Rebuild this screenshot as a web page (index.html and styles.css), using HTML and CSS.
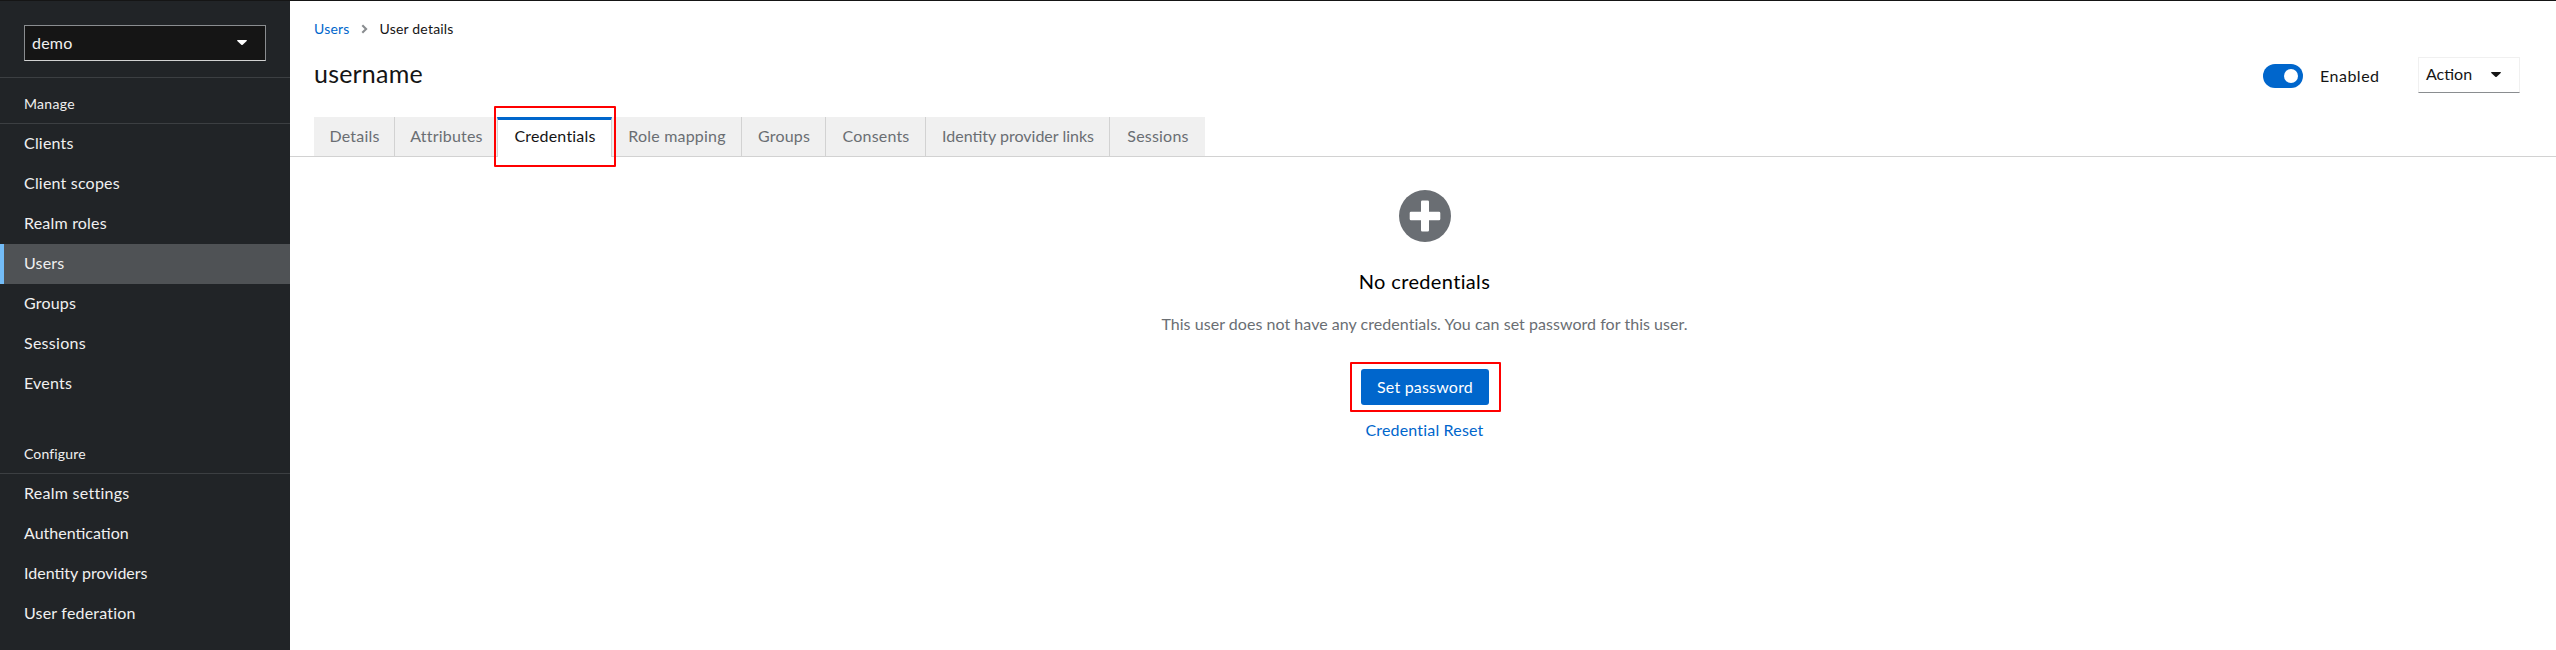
FILE: index.html
```html
<!DOCTYPE html>
<html lang="en">
<head>
<meta charset="utf-8">
<title>User details</title>
<link rel="stylesheet" href="styles.css">
</head>
<body>
<div class="page">
  <aside class="sidebar">
    <div class="realm">
      <button class="realm-select"><span>demo</span>
        <svg class="caret" viewBox="0 0 10 5"><path d="M.7 0h8.6q1 .1.4.9L5.7 4.7q-.7.6-1.4 0L.3.9Q-.3.1.7 0z"/></svg>
      </button>
    </div>
    <nav>
      <h2 class="nav-title">Manage</h2>
      <a class="nav-item">Clients</a>
      <a class="nav-item">Client scopes</a>
      <a class="nav-item">Realm roles</a>
      <a class="nav-item current">Users</a>
      <a class="nav-item">Groups</a>
      <a class="nav-item wide">Sessions</a>
      <a class="nav-item">Events</a>
      <h2 class="nav-title second">Configure</h2>
      <a class="nav-item wide">Realm settings</a>
      <a class="nav-item tight">Authentication</a>
      <a class="nav-item tight">Identity providers</a>
      <a class="nav-item">User federation</a>
    </nav>
  </aside>
  <main class="main">
    <div class="breadcrumb">
      <a class="link">Users</a>
      <svg class="chevron" viewBox="0 0 7 10"><path d="M1.3 1.2 5.1 5 1.3 8.8"/></svg>
      <span>User details</span>
    </div>
    <header class="header">
      <h1 class="title">username</h1>
      <div class="switch"><span class="knob"></span></div>
      <span class="switch-label">Enabled</span>
      <button class="action"><span class="tight">Action</span>
        <svg class="caret" viewBox="0 0 10 5"><path d="M.7 0h8.6q1 .1.4.9L5.7 4.7q-.7.6-1.4 0L.3.9Q-.3.1.7 0z"/></svg>
      </button>
    </header>
    <div class="tabs">
      <a class="tab t-details">Details</a>
      <a class="tab t-attributes">Attributes</a>
      <a class="tab t-credentials active">Credentials<span class="mark mark-tab"></span></a>
      <a class="tab t-roles">Role mapping</a>
      <a class="tab t-groups">Groups</a>
      <a class="tab t-consents">Consents</a>
      <a class="tab t-idp tight">Identity provider links</a>
      <a class="tab t-sessions">Sessions</a>
    </div>
    <section class="empty">
      <svg class="plus" viewBox="0 0 52 52"><circle cx="26" cy="26" r="26"/><path d="M23.3 10.5h5.4q1.3 0 1.3 1.3v10h10q1.3 0 1.3 1.3v5.8q0 1.3-1.3 1.3H30v10q0 1.3-1.3 1.3h-5.4q-1.3 0-1.3-1.3v-10H12q-1.3 0-1.3-1.3v-5.8q0-1.3 1.3-1.3h10v-10q0-1.3 1.3-1.3z" fill="#fff"/></svg>
      <h2 class="empty-title">No credentials</h2>
      <p class="empty-text">This user does not have any credentials. You can set password for this user.</p>
      <button class="primary">Set password<span class="mark mark-button"></span></button>
      <a class="link reset">Credential Reset</a>
    </section>
  </main>
</div>
</body>
</html>
```
FILE: styles.css
```css
* { box-sizing: border-box; }
body {
  margin: 0;
  font: 16px/24px Lato, "Open Sans", sans-serif;
  letter-spacing: .2px;
  color: #151515;
  background: #fff;
}
h1, h2, p { margin: 0; font-weight: 400; }
button { font: inherit; letter-spacing: inherit; margin: 0; }
.page { display: flex; height: 650px; border-top: 1px solid #151515; overflow: hidden; }

.sidebar { width: 290px; flex: none; background: #212427; color: #f0f0f0; }
.realm { height: 77px; padding: 24px 24px 0; border-bottom: 1px solid #3c3f42; }
.realm-select {
  display: flex; align-items: center; justify-content: space-between;
  width: 242px; height: 36px; padding: 0 18px 1px 7px;
  color: #f0f0f0; background: #151515;
  border: 1px solid #8a8d90; border-bottom-color: #d2d2d2;
}
.caret { width: 10px; height: 5px; fill: currentColor; }
.realm-select .caret { fill: #fff; }
.nav-title {
  height: 46px; padding: 14px 24px 0;
  font-size: 14px; letter-spacing: .3px;
  border-bottom: 1px solid #3c3f42;
}
.nav-title.second { height: 70px; padding-top: 38px; letter-spacing: .15px; }
.nav-item { display: block; height: 40px; padding: 7px 24px; }
.nav-item.current { background: #4f5255; border-left: 4px solid #73bcf7; padding-left: 20px; }
.wide { letter-spacing: .27px; }
.tight { letter-spacing: 0; }

.main { flex: 1; min-width: 0; }
.link { color: #06c; }
.breadcrumb { display: flex; align-items: center; height: 24px; margin: 16px 24px 0; font-size: 14px; }
.chevron { width: 7px; height: 10px; margin: 0 12px 0 11px; fill: none; stroke: #8a8d90; stroke-width: 2.1; }
.header { display: flex; align-items: center; height: 36px; margin: 16px 36px 0 24px; }
.title { flex: 1; font-size: 25px; letter-spacing: .2px; padding-bottom: 4px; }
.switch { display: flex; justify-content: flex-end; align-items: center; width: 40px; height: 24px; padding-right: 5px; border-radius: 12px; background: #06c; margin-top: 2px; }
.knob { width: 14px; height: 14px; border-radius: 50%; background: #fff; }
.switch-label { width: 98px; margin: 1px 0 0 17px; letter-spacing: .5px; }
.action {
  display: flex; align-items: center; justify-content: space-between;
  width: 102px; height: 36px; padding: 0 18px 2px 7px;
  background: #fff; color: #151515;
  border: 1px solid #f0f0f0; border-bottom-color: #8a8d90;
}

.tabs { display: flex; height: 40px; margin-top: 24px; padding-left: 24px; border-bottom: 1px solid #d2d2d2; }
.tab {
  flex: none; height: 39px; padding: 7px 0 0 1px;
  text-align: center; color: #6a6e73; background: #f0f0f0;
  border-right: 1px solid #d2d2d2;
}
.tab.active {
  position: relative; height: 40px; padding-top: 4px;
  color: #151515; background: #fff;
  border-left: 1px solid #d2d2d2; border-top: 3px solid #06c;
}
.t-details { width: 81px; }
.t-attributes { width: 102px; border-right: 0; }
.t-credentials { width: 115px; }
.t-roles { width: 130px; }
.t-groups { width: 84px; }
.t-consents { width: 100px; }
.t-idp { width: 184px; }
.t-sessions { width: 95px; border-right: 0; }

/* red outlines laid over the highlighted controls */
.mark { position: absolute; border: 2px solid #f00; border-radius: 1px; }
.mark-tab { left: -4px; right: -5px; top: -14px; height: 61px; }
.mark-button { left: -11px; right: -12px; top: -7px; bottom: -7px; }

.empty { display: flex; flex-direction: column; align-items: center; padding-top: 33px; padding-left: 3px; }
.plus { width: 52px; height: 52px; fill: #6a6e73; }
.empty-title { margin-top: 26px; font-size: 20px; line-height: 26px; letter-spacing: .35px; color: #000; }
.empty-text { margin-top: 18px; color: #6a6e73; letter-spacing: .04px; }
.primary {
  position: relative; width: 128px; height: 36px; margin-top: 33px; padding: 0 0 1px 1px;
  color: #fff; background: #06c; border: 0; border-radius: 3px;
}
.reset { margin-top: 13px; letter-spacing: .17px; }
```
